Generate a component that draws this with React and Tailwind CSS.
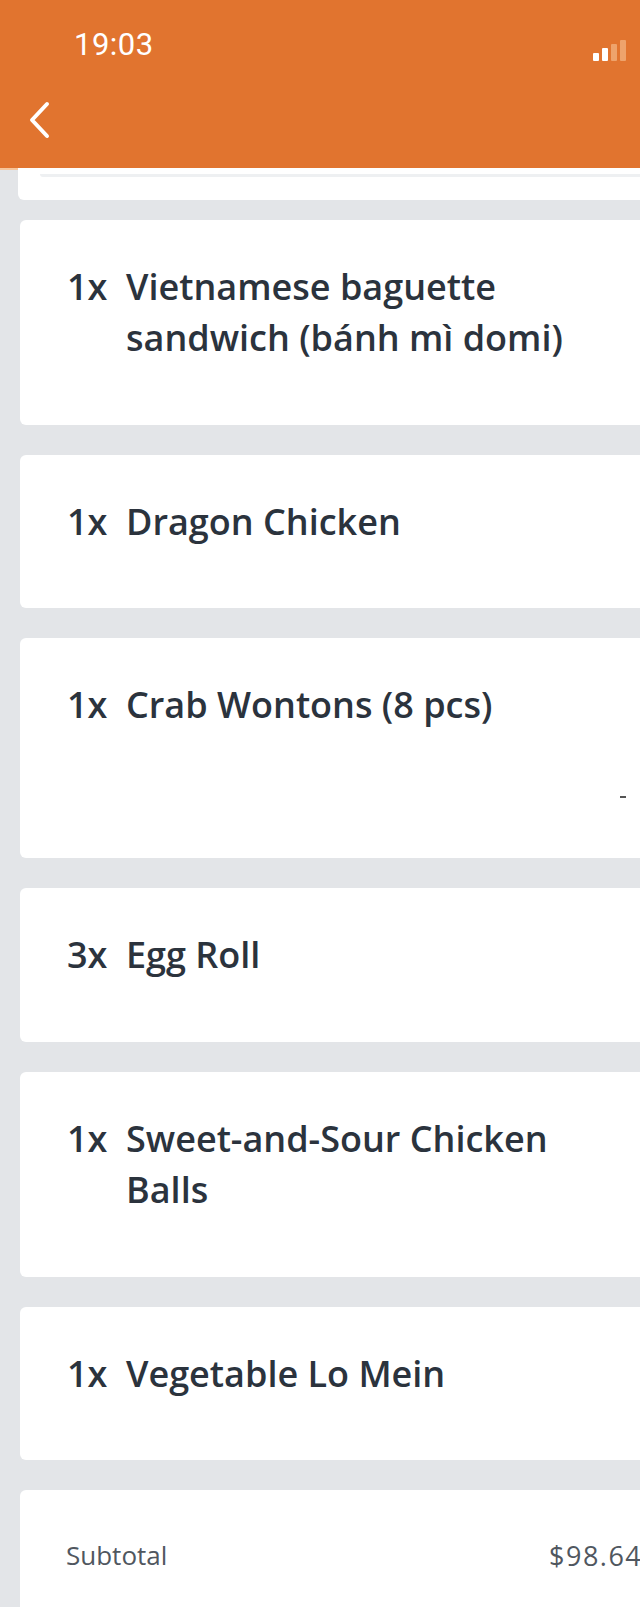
import React from "react";

const items = [
  { q: "1x", name: ["Vietnamese baguette", "sandwich (bánh mì domi)"], h: "h-[205px]" },
  { q: "1x", name: ["Dragon Chicken"], h: "h-[153px]" },
  { q: "1x", name: ["Crab Wontons (8 pcs)"], h: "h-[220px]", mark: true },
  { q: "3x", name: ["Egg Roll"], h: "h-[154px]" },
  { q: "1x", name: ["Sweet-and-Sour Chicken", "Balls"], h: "h-[205px]" },
  { q: "1x", name: ["Vegetable Lo Mein"], h: "h-[153px]" },
];

export default function App() {
  return (
    <div className="w-[640px] h-[1607px] overflow-hidden bg-[#e3e5e8] relative" style={{ fontFamily: "'Open Sans', Lato, sans-serif" }}>
      <div className="h-[168px] bg-[#e1742f] flex flex-col">
        <div className="h-[90px] flex items-center justify-between pl-[74px] pr-[14px]">
          <span className="text-white text-[31px] tracking-[0.5px]" style={{ fontFamily: "Roboto, sans-serif" }}>19:03</span>
          <div className="flex items-end gap-[3px] pt-[10px]">
            <div className="w-[6px] h-[8px] bg-white rounded-[1px]"></div>
            <div className="w-[6px] h-[13px] bg-white rounded-[1px]"></div>
            <div className="w-[6px] h-[17px] bg-[#eea36c] rounded-[1px]"></div>
            <div className="w-[6px] h-[21px] bg-[#eea36c] rounded-[1px]"></div>
          </div>
        </div>
        <div className="flex items-center pl-[26px] h-[60px]">
          <svg width="28" height="40" viewBox="0 0 28 40" fill="none">
            <path d="M21 4 L6 20 L21 36" stroke="white" strokeWidth="4" strokeLinecap="round" strokeLinejoin="round" />
          </svg>
        </div>
      </div>
      <div className="h-[2px] bg-[#f6c59c]"></div>
      <div className="ml-[18px] w-[660px] h-[32px] bg-white rounded-bl-[6px] -mt-[2px] pt-[6px] pl-[22px]">
        <div className="h-[3px] bg-[#eef0f2] rounded-b-[4px]"></div>
      </div>
      <div className="flex flex-col gap-[30px] pt-[20px]">
        {items.map((it, i) => (
          <div key={i} className={`ml-[20px] w-[660px] bg-white rounded-l-[6px] ${it.h} pt-[41px] pl-[47px] relative`}>
            <div className="flex text-[#2b333d] font-semibold text-[36px] leading-[51px]">
              <span className="w-[59px] shrink-0">{it.q}</span>
              <div className="flex flex-col">
                {it.name.map((n, j) => (
                  <span key={j}>{n}</span>
                ))}
              </div>
            </div>
            {it.mark && <div className="absolute left-[600px] top-[158px] w-[6px] h-[2px] bg-[#555]"></div>}
          </div>
        ))}
        <div className="ml-[20px] w-[660px] h-[200px] bg-white rounded-l-[6px] pt-[46px] pl-[46px] flex">
          <div className="flex text-[#50575f] text-[26px]">
            <span className="w-[483px] shrink-0">Subtotal</span>
            <span className="whitespace-nowrap tracking-[1.5px] text-[27px]">$98.64</span>
          </div>
        </div>
      </div>
    </div>
  );
}
